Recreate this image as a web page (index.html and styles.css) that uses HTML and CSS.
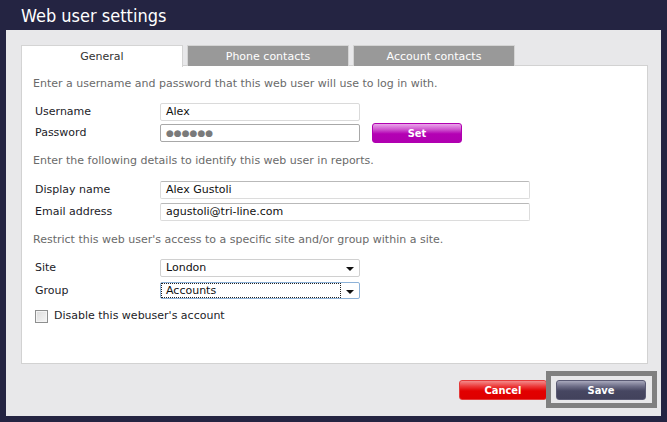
FILE: index.html
```html
<!DOCTYPE html>
<html>
<head>
<meta charset="utf-8">
<link rel="stylesheet" href="styles.css">
</head>
<body>
<div class="title">Web user settings</div>
<div class="panel">
  <div class="tabs">
    <div class="tab active">General</div>
    <div class="tab">Phone contacts</div>
    <div class="tab">Account contacts</div>
  </div>
  <div class="content">
    <p class="intro first">Enter a username and password that this web user will use to log in with.</p>
    <div class="row r-user">
      <span class="label">Username</span>
      <div class="field short light">Alex</div>
    </div>
    <div class="row r-pass">
      <span class="label">Password</span>
      <div class="field short dark"><span class="dots">●●●●●●</span></div>
      <button class="btn set">Set</button>
    </div>
    <p class="intro i2">Enter the following details to identify this web user in reports.</p>
    <div class="row r-disp">
      <span class="label">Display name</span>
      <div class="field long">Alex Gustoli</div>
    </div>
    <div class="row r-mail">
      <span class="label">Email address</span>
      <div class="field long">agustoli@tri-line.com</div>
    </div>
    <p class="intro i3">Restrict this web user's access to a specific site and/or group within a site.</p>
    <div class="row r-site">
      <span class="label">Site</span>
      <div class="select"><span class="sel-text">London</span><span class="arrow"></span></div>
    </div>
    <div class="row r-group">
      <span class="label">Group</span>
      <div class="select focus"><span class="sel-text">Accounts</span><span class="arrow"></span></div>
    </div>
    <div class="row r-check">
      <span class="checkbox"></span>
      <span class="check-label">Disable this webuser's account</span>
    </div>
  </div>
  <div class="actions">
    <button class="btn cancel">Cancel</button>
    <div class="save-wrap">
      <button class="btn save">Save</button>
      <span class="highlight"></span>
    </div>
  </div>
</div>
</body>
</html>
```

FILE: styles.css
```css
html, body {
  margin: 0;
  padding: 0;
}
body {
  background: #242442;
  width: 667px;
  height: 422px;
  overflow: hidden;
  font-family: "DejaVu Sans", Verdana, sans-serif;
  font-size: 11px;
  line-height: 14px;
}
.title {
  height: 30px;
  box-sizing: border-box;
  padding: 5px 0 0 21px;
  color: #ffffff;
  font-family: "DejaVu Sans Condensed", "DejaVu Sans", sans-serif;
  font-size: 18px;
  line-height: 22px;
}
.panel {
  margin: 0 6px;
  height: 386px;
  box-sizing: border-box;
  background: #e8e8ea;
  padding: 15px 13px 0 15px;
}
.tabs {
  display: flex;
  gap: 4px;
  height: 21px;
  margin-bottom: -1px;
  position: relative;
  z-index: 1;
}
.tab {
  width: 162px;
  box-sizing: border-box;
  height: 21px;
  border: 1px solid #d4d4d4;
  border-bottom: none;
  background: #999999;
  color: #ffffff;
  text-align: center;
  line-height: 21px;
}
.tab.active {
  background: #ffffff;
  color: #333333;
  height: 22px;
}
.content {
  background: #ffffff;
  border: 1px solid #d2d2d2;
  height: 299px;
  box-sizing: border-box;
  padding: 11px 12px 0 11px;
}
.intro {
  margin: 0;
  color: #6a6a6a;
}
.i2 { margin-top: 11px; }
.i3 { margin-top: 12px; }
.row {
  display: flex;
  align-items: center;
  color: #1c1c28;
}
.label {
  width: 125px;
  margin-left: 2px;
}
.r-user { margin-top: 12px; height: 18px; }
.r-pass { margin-top: 2px; height: 20px; }
.r-disp { margin-top: 13px; height: 18px; }
.r-mail { margin-top: 4px; height: 18px; }
.r-site { margin-top: 12px; height: 18px; }
.r-group { margin-top: 5px; height: 17px; }
.r-check { margin-top: 10px; height: 14px; }
.field {
  box-sizing: border-box;
  height: 18px;
  border: 1px solid #dcdcdc;
  border-top-color: #b9b9b9;
  border-radius: 2px;
  padding: 0 5px;
  line-height: 16px;
  color: #111111;
  background: #ffffff;
}
.field.short { width: 200px; }
.field.long { width: 370px; }
.field.light {
  border-color: #dadada;
}
.field.dark {
  border-color: #a8a8a8;
}
.dots {
  color: #7a7a7a;
  font-size: 9px;
  letter-spacing: 0px;
}
.btn {
  border: none;
  padding: 0;
  margin: 0;
  color: #ffffff;
  font-family: "DejaVu Sans Condensed", "DejaVu Sans", sans-serif;
  font-weight: bold;
  font-size: 11px;
  height: 20px;
  border-radius: 3px;
  box-sizing: border-box;
}
.set {
  width: 90px;
  margin-left: 12px;
  background: linear-gradient(#eaa6ea 0%, #cf55cf 30%, #b400b4 55%, #b000b0 100%);
  border: 1px solid #b000b0;
}
.select {
  position: relative;
  width: 200px;
  height: 18px;
  box-sizing: border-box;
  border: 1px solid #d0d0d0;
  border-radius: 2px;
  display: flex;
  align-items: center;
  padding-left: 5px;
  color: #111111;
}
.select.focus {
  height: 17px;
  border-color: #8db2d8;
  padding-left: 1px;
}
.select.focus .sel-text {
  outline: 1px dotted #222222;
  outline-offset: 0;
  width: 178px;
  height: 13px;
  line-height: 13px;
  padding-left: 4px;
  box-sizing: border-box;
}
.arrow {
  position: absolute;
  right: 5px;
  top: 7px;
  width: 0;
  height: 0;
  border-left: 4px solid transparent;
  border-right: 4px solid transparent;
  border-top: 4px solid #111111;
}
.checkbox {
  width: 13px;
  height: 13px;
  box-sizing: border-box;
  margin-left: 2px;
  border: 1px solid #8e8f8f;
  background: linear-gradient(135deg, #dcdcdc, #f6f6f6);
  box-shadow: inset 0 0 0 1px #f4f4f4;
}
.check-label {
  margin-left: 6px;
}
.actions {
  display: flex;
  justify-content: flex-end;
  gap: 9px;
  margin-top: 16px;
  padding-right: 2px;
}
.cancel {
  width: 88px;
  background: linear-gradient(#f38a8a 0%, #ec3a3a 30%, #e20000 55%, #de0000 100%);
  border: 1px solid #e43a3a;
}
.save-wrap {
  position: relative;
  display: flex;
}
.save {
  width: 90px;
  background: linear-gradient(#a8a8bc 0%, #6c6c86 30%, #464661 55%, #42425c 100%);
  border: 1px solid #5a5a74;
}
.highlight {
  position: absolute;
  left: -10px;
  top: -9px;
  width: 111px;
  height: 37px;
  box-sizing: border-box;
  border: 5px solid #808080;
}
```
